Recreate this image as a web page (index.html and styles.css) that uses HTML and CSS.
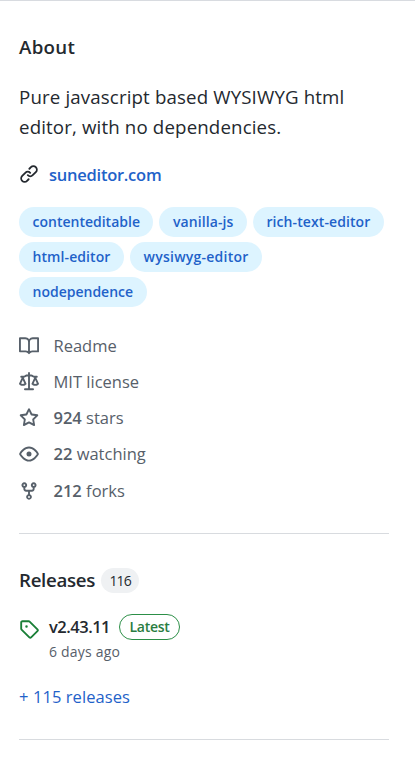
FILE: index.html
```
<!DOCTYPE html>
<html lang="en">
<head>
	<meta charset="utf-8">
	<title>SunEditor</title>
	<link rel="stylesheet" href="styles.css">
</head>
<body>
	<div class="sidebar">
		<section class="about">
			<h2>About</h2>
			<p class="description">Pure javascript based WYSIWYG html<br>editor, with no dependencies.</p>

			<div class="website">
				<svg class="icon" viewBox="0 0 16 16"><path d="M7.775 3.275a.75.75 0 001.06 1.06l1.25-1.25a2 2 0 112.83 2.83l-2.5 2.5a2 2 0 01-2.83 0 .75.75 0 00-1.06 1.06 3.5 3.5 0 004.95 0l2.5-2.5a3.5 3.5 0 00-4.95-4.95l-1.25 1.25zm-4.69 9.64a2 2 0 010-2.83l2.5-2.5a2 2 0 012.83 0 .75.75 0 001.06-1.06 3.5 3.5 0 00-4.95 0l-2.5 2.5a3.5 3.5 0 004.95 4.95l1.25-1.25a.75.75 0 00-1.06-1.06l-1.25 1.25a2 2 0 01-2.83 0z"/></svg>
				<a href="#">suneditor.com</a>
			</div>

			<div class="topics">
				<a class="topic" href="#">contenteditable</a>
				<a class="topic topic_loose" href="#">vanilla-js</a>
				<a class="topic topic_loose" href="#">rich-text-editor</a>
				<a class="topic topic_loose" href="#">html-editor</a>
				<a class="topic topic_wide" href="#">wysiwyg-editor</a>
				<a class="topic" href="#">nodependence</a>
			</div>

			<ul class="stats">
				<li>
					<svg class="icon" viewBox="0 0 16 16"><path fill-rule="evenodd" d="M0 1.75A.75.75 0 01.75 1h4.253c1.227 0 2.317.59 3 1.501A3.744 3.744 0 0111.006 1h4.245a.75.75 0 01.75.75v10.5a.75.75 0 01-.75.75h-4.507a2.25 2.25 0 00-1.591.659l-.622.621a.75.75 0 01-1.06 0l-.622-.621A2.25 2.25 0 005.258 13H.75a.75.75 0 01-.75-.75V1.75zm8.755 3a2.25 2.25 0 012.25-2.25H14.5v9h-3.757c-.71 0-1.4.201-1.992.572l.004-7.322zm-1.504 7.324l.004-5.073-.002-2.253A2.25 2.25 0 005.003 2.5H1.5v9h3.757a3.75 3.75 0 011.994.574z"/></svg>
					<span>Readme</span>
				</li>
				<li>
					<svg class="icon" viewBox="0 0 16 16"><path fill-rule="evenodd" d="M8.75.75a.75.75 0 00-1.5 0V2h-.984c-.305 0-.604.08-.869.23l-1.288.737A.25.25 0 013.984 3H1.75a.75.75 0 000 1.5h.428L.066 9.192a.75.75 0 00.154.838l.53-.53-.53.53v.001l.002.002.002.002.006.006.016.015.045.04a3.514 3.514 0 00.686.45A4.492 4.492 0 003 11c.88 0 1.556-.22 2.023-.454a3.515 3.515 0 00.686-.45l.045-.04.016-.015.006-.006.002-.002.001-.002L5.25 9.5l.53.53a.75.75 0 00.154-.838L3.822 4.5h.162c.305 0 .604-.08.869-.23l1.289-.737a.25.25 0 01.124-.033h.984V13h-2.5a.75.75 0 000 1.5h6.5a.75.75 0 000-1.5h-2.5V3.5h.984a.25.25 0 01.124.033l1.29.736c.264.152.563.231.868.231h.162l-2.112 4.692a.75.75 0 00.154.838l.53-.53-.53.53v.001l.002.002.002.002.006.006.016.015.045.04a3.517 3.517 0 00.686.45A4.492 4.492 0 0013 11c.88 0 1.556-.22 2.023-.454a3.512 3.512 0 00.686-.45l.045-.04.01-.01.006-.005.006-.006.002-.002.001-.002-.529-.531.53.53a.75.75 0 00.154-.838L13.823 4.5h.427a.75.75 0 000-1.5h-2.234a.25.25 0 01-.124-.033l-1.29-.736A1.75 1.75 0 009.735 2H8.75V.75zM1.695 9.227c.285.135.718.273 1.305.273s1.02-.138 1.305-.273L3 6.327l-1.305 2.9zm10 0c.285.135.718.273 1.305.273s1.02-.138 1.305-.273L13 6.327l-1.305 2.9z"/></svg>
					<span>MIT license</span>
				</li>
				<li>
					<svg class="icon" viewBox="0 0 16 16"><path fill-rule="evenodd" d="M8 .25a.75.75 0 01.673.418l1.882 3.815 4.21.612a.75.75 0 01.416 1.279l-3.046 2.97.719 4.192a.75.75 0 01-1.088.791L8 12.347l-3.766 1.98a.75.75 0 01-1.088-.79l.72-4.194L.818 6.374a.75.75 0 01.416-1.28l4.21-.611L7.327.668A.75.75 0 018 .25zm0 2.445L6.615 5.5a.75.75 0 01-.564.41l-3.097.45 2.24 2.184a.75.75 0 01.216.664l-.528 3.084 2.769-1.456a.75.75 0 01.698 0l2.77 1.456-.53-3.084a.75.75 0 01.216-.664l2.24-2.183-3.096-.45a.75.75 0 01-.564-.41L8 2.694v.001z"/></svg>
					<span><strong>924</strong> stars</span>
				</li>
				<li>
					<svg class="icon" viewBox="0 0 16 16"><path fill-rule="evenodd" d="M1.679 7.932c.412-.621 1.242-1.75 2.366-2.717C5.175 4.242 6.527 3.5 8 3.5c1.473 0 2.824.742 3.955 1.715 1.124.967 1.954 2.096 2.366 2.717a.119.119 0 010 .136c-.412.621-1.242 1.75-2.366 2.717C10.825 11.758 9.473 12.5 8 12.5c-1.473 0-2.824-.742-3.955-1.715C2.92 9.818 2.09 8.69 1.679 8.068a.119.119 0 010-.136zM8 2c-1.981 0-3.67.992-4.933 2.078C1.797 5.169.88 6.423.43 7.1a1.619 1.619 0 000 1.798c.45.678 1.367 1.932 2.637 3.024C4.329 13.008 6.019 14 8 14c1.981 0 3.67-.992 4.933-2.078 1.27-1.091 2.187-2.345 2.637-3.023a1.619 1.619 0 000-1.798c-.45-.678-1.367-1.932-2.637-3.023C11.671 2.992 9.981 2 8 2zm0 8a2 2 0 100-4 2 2 0 000 4z"/></svg>
					<span><strong>22</strong> watching</span>
				</li>
				<li>
					<svg class="icon" viewBox="0 0 16 16"><path fill-rule="evenodd" d="M5 3.25a.75.75 0 11-1.5 0 .75.75 0 011.5 0zm0 2.122a2.25 2.25 0 10-1.5 0v.878A2.25 2.25 0 005.75 8.5h1.5v2.128a2.251 2.251 0 101.5 0V8.5h1.5a2.25 2.25 0 002.25-2.25v-.878a2.25 2.25 0 10-1.5 0v.878a.75.75 0 01-.75.75h-4.5A.75.75 0 015 6.25v-.878zm3.75 7.378a.75.75 0 11-1.5 0 .75.75 0 011.5 0zm3-8.75a.75.75 0 100-1.5.75.75 0 000 1.5z"/></svg>
					<span><strong>212</strong> forks</span>
				</li>
			</ul>
		</section>

		<section class="releases">
			<h2>Releases <span class="counter">116</span></h2>
			<div class="release">
				<svg class="icon" viewBox="0 0 16 16"><path fill-rule="evenodd" d="M2.5 7.775V2.75a.25.25 0 01.25-.25h5.025a.25.25 0 01.177.073l6.25 6.25a.25.25 0 010 .354l-5.025 5.025a.25.25 0 01-.354 0l-6.25-6.25a.25.25 0 01-.073-.177zm-1.5 0V2.75C1 1.784 1.784 1 2.75 1h5.025c.464 0 .91.184 1.238.513l6.25 6.25a1.75 1.75 0 010 2.474l-5.026 5.026a1.75 1.75 0 01-2.474 0l-6.25-6.25A1.75 1.75 0 011 7.775zM6 5a1 1 0 100 2 1 1 0 000-2z"/></svg>
				<div class="release_info">
					<div class="release_title">
						<span class="version">v2.43.11</span>
						<span class="label">Latest</span>
					</div>
					<div class="date">6 days ago</div>
				</div>
			</div>
			<a class="more" href="#">+ 115 releases</a>
		</section>
	</div>
</body>
</html>
```

FILE: styles.css
```
* { box-sizing: border-box; }
body { margin: 0; background-color: #fff; color: #24292f; font-family: "Open Sans", "Noto Sans", sans-serif; font-size: 16.5px; line-height: 26px; white-space: nowrap; }
h2, p, ul { margin: 0; padding: 0; }
h2 { font-size: 18.7px; font-weight: 600; line-height: 30px; }
a { color: #1f62c9; text-decoration: none; }
strong { font-weight: 600; }

.sidebar { height: 762px; padding: 0 26px 0 19px; border-top: 1px solid #d8dbe0; }
.icon { display: block; flex: none; width: 20px; height: 20px; fill: currentColor; }

/* About */

.about { height: 533px; padding-top: 31px; border-bottom: 1px solid #d8dbdf; }
.about h2 { letter-spacing: .3px; }
.description { margin-top: 20px; font-size: 18.7px; letter-spacing: .14px; line-height: 30px; }
.website { display: flex; align-items: center; gap: 10px; margin-top: 20px; }
.website .icon { margin-top: -2px; }
.website a { font-weight: 600; letter-spacing: -.25px; }
.topics { display: flex; flex-wrap: wrap; gap: 5px 6px; margin-top: 19px; }
.topic { height: 30px; padding: 0 13.5px; border-radius: 15px; background-color: #ddf4ff; font-size: 14px; font-weight: 600; line-height: 29px; }
.topic_loose { letter-spacing: .09px; }
.topic_wide { letter-spacing: .25px; }
.stats { margin-top: 25.5px; color: #57606a; list-style: none; }
.stats li { display: flex; align-items: center; gap: 14.5px; height: 26.25px; margin-bottom: 10px; }

/* Releases */

.releases { height: 206px; padding-top: 31px; border-bottom: 1px solid #d8dbdf; }
.releases h2 { display: flex; align-items: center; gap: 6px; letter-spacing: -.3px; }
.counter { width: 38px; height: 25px; margin-top: 1px; border-radius: 13px; background-color: #eff1f3; font-size: 14px; font-weight: 500; letter-spacing: -.9px; line-height: 25px; text-align: center; }
.release { display: flex; gap: 10px; margin-top: 19px; }
.release .icon { margin-top: 5px; color: #1a7f37; }
.release_title { display: flex; align-items: center; gap: 9px; height: 26px; }
.version { font-weight: 600; letter-spacing: -.5px; line-height: 28px; }
.label { height: 26px; padding: 0 9.5px; border: 1px solid #2c8f47; border-radius: 13px; color: #2a7d42; font-size: 14px; font-weight: 600; letter-spacing: -.3px; line-height: 23px; }
.date { color: #57606a; font-size: 14px; letter-spacing: .2px; line-height: 23px; }
.more { display: block; margin-top: 21px; letter-spacing: .08px; }
```
